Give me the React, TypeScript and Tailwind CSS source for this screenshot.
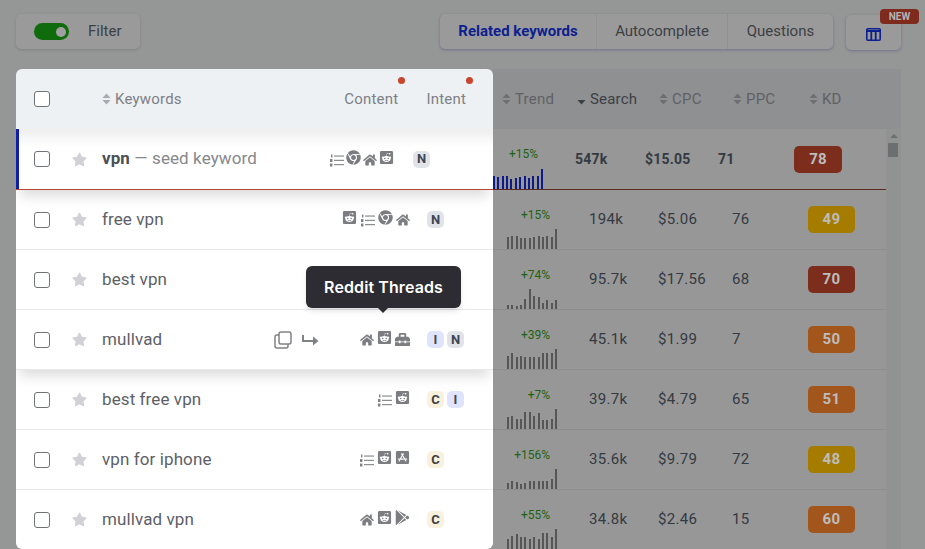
import React from 'react';
import { FaChrome, FaHome, FaRedditSquare, FaStar, FaToolbox, FaAppStoreIos, FaGooglePlay } from 'react-icons/fa';

type IconName = 'list' | 'chrome' | 'home' | 'reddit' | 'tools' | 'store' | 'play';

type Row = {
  keyword: string;
  content: IconName[];
  intent: string[];
  trend: string;
  bars: number[];
  search: string;
  cpc: string;
  ppc: string;
  kd: number;
  kdColor: string;
};

const ROWS: Row[] = [
  { keyword: 'free vpn', content: ['reddit', 'list', 'chrome', 'home'], intent: ['N'], trend: '+15%', bars: [12, 13, 13, 11, 11, 11, 12, 13, 12, 13, 12, 20], search: '194k', cpc: '$5.06', ppc: '76', kd: 49, kdColor: 'bg-[#a67c00]' },
  { keyword: 'best vpn', content: [], intent: [], trend: '+74%', bars: [4, 4, 3, 4, 10, 20, 13, 12, 6, 9, 6, 9], search: '95.7k', cpc: '$17.56', ppc: '68', kd: 70, kdColor: 'bg-[#7c2d1c]' },
  { keyword: 'mullvad', content: ['home', 'reddit', 'tools'], intent: ['I', 'N'], trend: '+39%', bars: [13, 16, 12, 13, 12, 12, 12, 12, 16, 16, 16, 20], search: '45.1k', cpc: '$1.99', ppc: '7', kd: 50, kdColor: 'bg-[#a3561c]' },
  { keyword: 'best free vpn', content: ['list', 'reddit'], intent: ['C', 'I'], trend: '+7%', bars: [12, 13, 10, 10, 17, 17, 13, 16, 9, 9, 10, 20], search: '39.7k', cpc: '$4.79', ppc: '65', kd: 51, kdColor: 'bg-[#a3561c]' },
  { keyword: 'vpn for iphone', content: ['list', 'reddit', 'store'], intent: ['C'], trend: '+156%', bars: [6, 8, 7, 5, 6, 8, 8, 8, 8, 8, 10, 20], search: '35.6k', cpc: '$9.79', ppc: '72', kd: 48, kdColor: 'bg-[#a67c00]' },
  { keyword: 'mullvad vpn', content: ['home', 'reddit', 'play'], intent: ['C'], trend: '+55%', bars: [10, 13, 15, 12, 12, 10, 12, 10, 16, 16, 12, 20], search: '34.8k', cpc: '$2.46', ppc: '15', kd: 60, kdColor: 'bg-[#a3561c]' },
];

const SortIcon = ({ className = 'text-[#a8abb0]' }: { className?: string }) => (
  <svg width="9" height="12" viewBox="0 0 9 12" className={className} fill="currentColor">
    <path d="M4.5 0.5 8.5 5H0.5Z" />
    <path d="M4.5 11.5 0.5 7H8.5Z" />
  </svg>
);

const ListIcon = () => (
  <svg width="15" height="13" viewBox="0 0 15 13" fill="#808185">
    <rect x="5" y="1.5" width="10" height="1.1" />
    <rect x="5" y="5.8" width="10" height="1.1" />
    <rect x="5" y="10.1" width="10" height="1.1" />
    <rect x="2" y="0.5" width="1.4" height="3" />
    <rect x="1" y="5" width="2.4" height="3" />
    <rect x="1" y="9.5" width="2.4" height="3" />
  </svg>
);

const ContentIcon = ({ name }: { name: IconName }) => {
  switch (name) {
    case 'list':
      return <ListIcon />;
    case 'chrome':
      return <FaChrome className="mb-[2px] text-[15px] text-[#7c7d81]" />;
    case 'home':
      return <FaHome className="text-[14px] text-[#7c7d81]" />;
    case 'reddit':
      return <FaRedditSquare className="mb-[2px] text-[15px] text-[#7c7d81]" />;
    case 'tools':
      return <FaToolbox className="text-[15px] text-[#7c7d81]" />;
    case 'store':
      return <FaAppStoreIos className="mb-[2px] text-[15px] text-[#7c7d81]" />;
    case 'play':
      return <FaGooglePlay className="mb-[2px] text-[15px] text-[#7c7d81]" />;
  }
};

const Intent = ({ letter }: { letter: string }) => {
  const tone = letter === 'N' ? 'bg-[#e0e4e9] text-[#3d4654]' : letter === 'I' ? 'bg-[#dfe3fb] text-[#3d4654]' : 'bg-[#f7f1de] text-[#3d3d3d]';
  return <span className={`flex h-[17px] w-[17px] items-center justify-center rounded-[5px] text-[13px] font-bold ${tone}`}>{letter}</span>;
};

const Checkbox = () => <span className="h-[16px] w-[16px] shrink-0 rounded-[3px] border border-[#6f7276] bg-white" />;

const Bars = ({ values, color }: { values: number[]; color: string }) => (
  <div className="flex h-[20px] items-end gap-[2.36px]">
    {values.map((h, i) => (
      <span key={i} className={`w-[2px] ${color}`} style={{ height: h }} />
    ))}
  </div>
);

const KeywordRow = ({ row, hovered }: { row: Row; hovered: boolean }) => (
  <div className={`flex h-[60px] items-center border-b border-[#e6e8ea] bg-white pl-[18px] ${hovered ? 'relative z-10 shadow-[0_10px_12px_-4px_rgba(0,0,0,0.14)]' : ''}`}>
    <Checkbox />
    <FaStar className="ml-[22px] text-[15px] text-[#cfd1d4]" />
    <span className="ml-[15px] text-[17px] tracking-[0.1px] text-[#5d6066]">{row.keyword}</span>
    <div className="ml-auto flex items-center">
      {hovered && (
        <div className="mr-[41px] flex items-center gap-[9px] text-[#808285]">
          <svg width="18" height="18" viewBox="0 0 18 18" fill="none" stroke="currentColor" strokeWidth="1.5">
            <rect x="5" y="1" width="12" height="12" rx="2" />
            <path d="M5 4H3a2 2 0 0 0-2 2v9a2 2 0 0 0 2 2h9a2 2 0 0 0 2-2v-2" />
          </svg>
          <svg width="18" height="12" viewBox="0 0 18 12" fill="currentColor">
            <path d="M1 1h2v5h9V2.5L17.5 7 12 11.5V8H1Z" />
          </svg>
        </div>
      )}
      <div className="mb-[2px] flex items-end gap-[3px]">
        {row.content.map((name, i) => (
          <ContentIcon key={i} name={name} />
        ))}
      </div>
      <div className="ml-[17px] flex w-[66px] gap-[3px]">
        {row.intent.map((l) => (
          <Intent key={l} letter={l} />
        ))}
      </div>
    </div>
  </div>
);

const MetricRow = ({ row }: { row: Row }) => (
  <div className="relative flex h-[60px] items-center border-b border-[#8d8d8d] text-[15px] tracking-[0.3px] text-[#333a42]">
    <div className="absolute bottom-0 left-[14px] flex w-[50px] flex-col items-end">
      <span className="mb-[5px] mr-[7px] text-[12px] tracking-normal text-[#1d6312]">{row.trend}</span>
      <Bars values={row.bars} color="bg-[#565656]" />
    </div>
    <span className="ml-[96px] w-[69px]">{row.search}</span>
    <span className="w-[74px]">{row.cpc}</span>
    <span className="w-[76px]">{row.ppc}</span>
    <span className={`flex h-[27px] w-[47px] items-center justify-center rounded-[5px] font-bold text-[#bdbdbd] ${row.kdColor}`}>{row.kd}</span>
  </div>
);

export default function App() {
  return (
    <div className="h-[549px] w-[925px] overflow-hidden bg-[#959696] font-['Roboto',sans-serif]">
      <div className="flex items-start pl-[16px] pr-[24px] pt-[14px]">
        <div className="flex h-[35px] w-[124px] items-center rounded-[5px] bg-[#9a9a9a] pl-[18px] shadow-[0_1px_3px_rgba(0,0,0,0.15)]">
          <span className="relative h-[17px] w-[35px] rounded-full bg-[#0f6b0b]">
            <span className="absolute right-[3px] top-[3.5px] h-[10px] w-[10px] rounded-full bg-[#a0a0a0]" />
          </span>
          <span className="ml-[19px] text-[15px] text-[#3c3f44]">Filter</span>
        </div>
        <div className="ml-auto flex h-[35px] items-center rounded-[5px] bg-[#9a9a9a] text-[15px] text-[#3c3f44] shadow-[0_1px_3px_rgba(0,0,90,0.25)]">
          <span className="flex h-full w-[157px] items-center justify-center border-r border-[#909090] font-bold text-[#0d1f8f]">Related keywords</span>
          <span className="flex h-full w-[131px] items-center justify-center border-r border-[#909090]">Autocomplete</span>
          <span className="flex h-full w-[105px] items-center justify-center">Questions</span>
        </div>
        <div className="relative ml-[13px] mt-[1px] flex h-[35px] w-[55px] items-center justify-center rounded-[5px] bg-[#9a9a9a] pt-[4px] shadow-[0_1px_3px_rgba(0,0,90,0.25)]">
          <svg width="15" height="13" viewBox="0 0 15 13" fill="none" stroke="#0d1f8f" strokeWidth="1.6">
            <rect x="0.8" y="0.8" width="13.4" height="11.4" rx="1" />
            <path d="M0.8 3h13.4M5.3 3v9M9.7 3v9" strokeWidth="1.8" />
          </svg>
          <span className="absolute right-[-18px] top-[-6px] w-[39px] rounded-[4px] bg-[#7e2a1c] text-center text-[10px] font-bold leading-[15px] text-[#b4b4b4]">NEW</span>
        </div>
      </div>

      <div className="mt-[19px] flex pl-[16px]">
        {/* spotlight panel, stays bright while the rest of the page is dimmed */}
        <div className="relative h-[480px] w-[477px] shrink-0 overflow-hidden rounded-[6px]">
          <div className="flex h-[60px] items-center bg-[#eef1f4] pl-[18px] text-[15px] tracking-[0.2px] text-[#7d8086]">
            <Checkbox />
            <SortIcon className="ml-[52px] text-[#a8abb0]" />
            <span className="ml-[4px]">Keywords</span>
            <span className="relative ml-auto">
              Content
              <span className="absolute right-[-7px] top-[-11px] h-[7px] w-[7px] rounded-full bg-[#c9452b]" />
            </span>
            <span className="relative ml-[28px] mr-[27px]">
              Intent
              <span className="absolute right-[-7px] top-[-11px] h-[7px] w-[7px] rounded-full bg-[#c9452b]" />
            </span>
          </div>

          <div className="relative z-10 flex h-[61px] items-center border-b border-[#b8452f] bg-gradient-to-b from-[#eeeeee] to-white to-[30%] pl-[3px] shadow-[0_10px_12px_-4px_rgba(0,0,0,0.14)]">
            <span className="absolute bottom-0 left-0 top-0 w-[3px] bg-[#0f1fa8]" />
            <span className="ml-[15px] flex"><Checkbox /></span>
            <FaStar className="ml-[22px] text-[15px] text-[#cfd1d4]" />
            <span className="ml-[15px] text-[17px] tracking-[0.1px] text-[#85888c]">
              <b className="text-[#4b4f55]">vpn</b> — seed keyword
            </span>
            <div className="mb-[2px] ml-auto flex items-end gap-[2px]">
              <ContentIcon name="list" />
              <ContentIcon name="chrome" />
              <ContentIcon name="home" />
              <ContentIcon name="reddit" />
            </div>
            <div className="ml-[19px] mr-[63px]">
              <Intent letter="N" />
            </div>
          </div>

          {ROWS.map((row, i) => (
            <KeywordRow key={row.keyword} row={row} hovered={i === 2} />
          ))}

          {/* tooltip for the hovered reddit icon */}
          <div className="absolute left-[290px] top-[197px] z-20 flex h-[42px] w-[155px] items-center justify-center rounded-[6px] bg-[#2d2c32] font-['Inter',sans-serif] text-[16px] font-semibold tracking-[0.1px] text-white shadow-md">
            Reddit Threads
            <span className="absolute bottom-[-5px] left-[72px] h-0 w-0 border-x-[5px] border-t-[5px] border-x-transparent border-t-[#2d2c32]" />
          </div>
        </div>

        <div className="w-[408px] shrink-0 bg-[#979797]">
          <div className="flex h-[60px] items-center bg-[#8f9091] pl-[9px] text-[15px] tracking-[0.2px] text-[#5f6166]">
            <SortIcon className="text-[#6d6f72]" />
            <span className="ml-[4px] w-[62px]">Trend</span>
            <svg width="9" height="5" viewBox="0 0 9 5" className="mt-[6px] text-[#3c3f44]" fill="currentColor">
              <path d="M0.5 0H8.5L4.5 4.5Z" />
            </svg>
            <span className="ml-[4px] w-[69px] text-[#3c3f44]">Search</span>
            <SortIcon className="text-[#6d6f72]" />
            <span className="ml-[4px] w-[61px]">CPC</span>
            <SortIcon className="text-[#6d6f72]" />
            <span className="ml-[4px] w-[63px]">PPC</span>
            <SortIcon className="text-[#6d6f72]" />
            <span className="ml-[4px]">KD</span>
          </div>
          <div className="relative flex">
            <div className="w-[393px]">
              <div className="relative flex h-[61px] items-center border-b border-[#5a2a20] text-[14px] font-bold tracking-[0.2px] text-[#333a42]">
                <div className="absolute bottom-0 left-0 flex w-[50px] flex-col items-end">
                  <span className="mb-[6px] mr-[5px] text-[12px] font-normal tracking-normal text-[#1d6312]">+15%</span>
                  <Bars values={[13, 12, 13, 13, 10, 11, 12, 13, 11, 13, 13, 20]} color="bg-[#0c1a8a]" />
                </div>
                <span className="ml-[82px] w-[70px]">547k</span>
                <span className="w-[73px]">$15.05</span>
                <span className="w-[76px]">71</span>
                <span className="flex h-[27px] w-[48px] items-center justify-center rounded-[5px] bg-[#7c2d1c] text-[15px] text-[#bdbdbd]">78</span>
              </div>
              {ROWS.map((row) => (
                <MetricRow key={row.keyword} row={row} />
              ))}
            </div>
            <div className="w-[15px] bg-[#919292] px-[2px] pt-[5px]">
              <svg width="10" height="5" viewBox="0 0 10 5" fill="#6d6f72" className="mx-auto">
                <path d="M5 0l4 4H1Z" />
              </svg>
              <div className="mt-[4px] h-[14px] w-[10px] bg-[#6d6e70]" />
            </div>
          </div>
        </div>
      </div>
    </div>
  );
}
